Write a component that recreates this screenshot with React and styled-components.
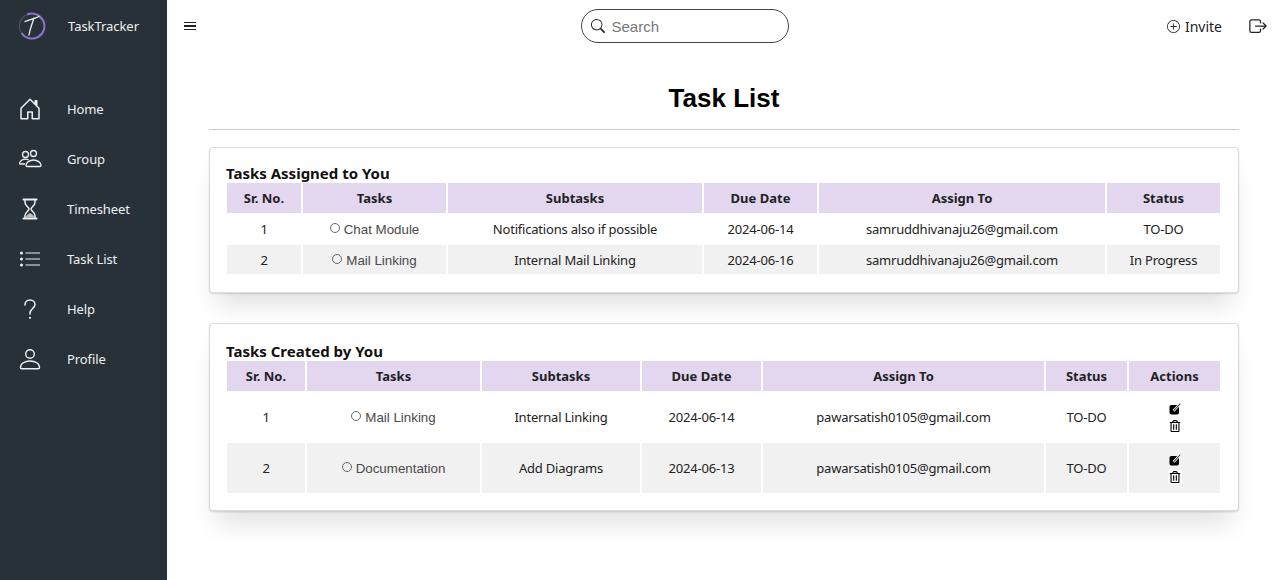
import React from "react";
import styled, { createGlobalStyle } from "styled-components";
import { BsHouseDoor, BsPlusCircle, BsSearch } from "react-icons/bs";
import { FaRegTrashAlt } from "react-icons/fa";
import { IoExitOutline } from "react-icons/io5";

const UI_FONT = `"Noto Sans", "Open Sans", sans-serif`;
const ARIAL = `"Liberation Sans", Arial, sans-serif`;

const GlobalStyle = createGlobalStyle`
  html, body {
    margin: 0;
    padding: 0;
    background: #fff;
    font-family: ${UI_FONT};
  }
  * {
    box-sizing: border-box;
  }
`;

const Page = styled.div`
  display: flex;
  width: 1280px;
  height: 580px;
  overflow: hidden;
`;

const Sidebar = styled.aside`
  width: 167px;
  flex-shrink: 0;
  background: #283138;
  color: #eef0f1;
  display: flex;
  flex-direction: column;
`;

const Brand = styled.div`
  height: 52px;
  display: flex;
  align-items: center;
  padding-left: 18px;
  gap: 22px;
  font-size: 13px;
  letter-spacing: -0.05px;
`;

const Nav = styled.nav`
  display: flex;
  flex-direction: column;
  padding-top: 32px;
`;

const NavItem = styled.div`
  height: 50px;
  display: flex;
  align-items: center;
  font-size: 13px;
  letter-spacing: -0.1px;
`;

const NavIcon = styled.span`
  width: 67px;
  padding-left: 18px;
  display: flex;
  align-items: center;
  font-size: 24px;
`;

const Main = styled.main`
  flex: 1;
  display: flex;
  flex-direction: column;
  min-width: 0;
`;

const Topbar = styled.header`
  height: 52px;
  display: flex;
  align-items: center;
  justify-content: space-between;
  padding: 0 12px 0 17px;
`;

const MenuButton = styled.span`
  display: flex;
  flex-direction: column;
  gap: 2px;
  width: 12px;
  span {
    height: 1.5px;
    background: #222;
  }
`;

const SearchBox = styled.div`
  width: 208px;
  height: 34px;
  margin-left: 8px;
  border: 1px solid #444;
  border-radius: 17px;
  display: flex;
  align-items: center;
  gap: 6px;
  padding-left: 9px;
  font-family: ${ARIAL};
  font-size: 15px;
  color: #777;
  svg {
    color: #222;
  }
`;

const TopActions = styled.div`
  display: flex;
  align-items: center;
  gap: 4px;
  font-size: 14px;
  color: #222;
`;

const Invite = styled.span`
  display: flex;
  align-items: center;
  gap: 5px;
  margin-right: 22px;
`;

const Content = styled.div`
  padding: 0 41px 0 42px;
`;

const Title = styled.h1`
  margin: 0;
  height: 78px;
  padding-top: 28px;
  border-bottom: 1px solid #ccc;
  font-family: ${ARIAL};
  font-size: 26px;
  line-height: 36px;
  font-weight: 700;
  text-align: center;
  color: #000;
`;

const Card = styled.section`
  margin-top: ${(p) => p.$top}px;
  padding: ${(p) => p.$padTop}px 15px ${(p) => p.$padBottom}px;
  background: #fff;
  border-radius: 4px;
  border: 1px solid #dcdcdc;
  box-shadow: 0 1px 2px rgba(0, 0, 0, 0.14), 0 20px 24px -8px rgba(0, 0, 0, 0.12);
`;

const CardTitle = styled.h2`
  margin: 0 0 0 1px;
  font-size: 15px;
  line-height: 18px;
  font-weight: 700;
  color: #111;
`;

const Table = styled.table`
  width: 997px;
  table-layout: fixed;
  border-collapse: separate;
  border-spacing: 2px;
  margin-top: -1px;
`;

const Th = styled.th`
  height: 30px;
  padding: 0;
  background: #e3d7f0;
  color: #222;
  font-size: 13px;
  font-weight: 700;
  text-align: center;
`;

const Td = styled.td`
  height: ${(p) => p.$height}px;
  padding: 0;
  background: ${(p) => (p.$alt ? "#f1f1f1" : "#fff")};
  color: #222;
  font-size: 13px;
  letter-spacing: -0.2px;
  text-align: center;
  white-space: nowrap;
`;

const TaskName = styled.span`
  font-family: ${ARIAL};
  font-size: 13.33px;
  letter-spacing: 0;
  color: #4a4a4a;
`;

const Radio = styled.span`
  display: inline-block;
  width: 10px;
  height: 10px;
  margin-right: 4px;
  border: 1px solid #666;
  border-radius: 50%;
  vertical-align: 1px;
`;

const Actions = styled.div`
  display: flex;
  flex-direction: column;
  align-items: center;
  gap: 5px;
  color: #000;
`;

const TrashWrap = styled.span`
  display: flex;
  padding: 1px;
  margin: -1px 0;
  background: #fff;
`;

function Logo() {
  return (
    <svg width="28" height="28" viewBox="0 0 28 28" fill="none">
      <path d="M9 2.6A12.5 12.5 0 1 1 3.5 21" stroke="#8f74cf" strokeWidth="2" />
      <path d="M3.5 21A12.5 12.5 0 0 1 9 2.6" stroke="#4a4f57" strokeWidth="1.4" />
      <path d="M7 9.5c4-2 9-2.5 14-5M16 6c-1.5 5-4 10-5 17" stroke="#f2f2f2" strokeWidth="1.3" strokeLinecap="round" />
    </svg>
  );
}

function GroupIcon() {
  return (
    <svg width="24" height="24" viewBox="0 0 24 24" fill="none" stroke="currentColor" strokeWidth="1.3">
      <circle cx="7.5" cy="7.5" r="3" />
      <circle cx="15.5" cy="6.5" r="3" />
      <path d="M1.5 17c0-3 3-4.8 6-4.8 1.4 0 2.3.3 3 .7M1.5 17h5.5" />
      <path d="M8 18.5c0-3 3.6-5.5 7.5-5.5s7.5 2.5 7.5 5.5c0 .6-.4 1-1 1H9c-.6 0-1-.4-1-1Z" />
    </svg>
  );
}

function HourglassIcon() {
  return (
    <svg width="24" height="24" viewBox="0 0 24 24" fill="none" stroke="currentColor" strokeWidth="1.5">
      <path d="M5.5 2.5h13M5.5 21.5h13" strokeWidth="2" strokeLinecap="round" />
      <path d="M7 3v2.5c0 3 4 5 4 6.5s-4 3.5-4 6.5V21M17 3v2.5c0 3-4 5-4 6.5s4 3.5 4 6.5V21" />
      <path d="M7.5 20.5c.5-2.5 3-3.5 4.5-4.5 1.5 1 4 2 4.5 4.5Z" fill="currentColor" opacity="0.75" stroke="none" />
    </svg>
  );
}

function ListIcon() {
  return (
    <svg width="24" height="24" viewBox="0 0 24 24" fill="currentColor">
      <circle cx="3.5" cy="6" r="1.5" />
      <circle cx="3.5" cy="12" r="1.5" />
      <circle cx="3.5" cy="18" r="1.5" />
      <path d="M7.5 5.5H22v1H7.5zM7.5 11.5H22v1H7.5zM7.5 17.5H22v1H7.5z" />
    </svg>
  );
}

function HelpIcon() {
  return (
    <svg width="24" height="24" viewBox="0 0 24 24" fill="none" stroke="currentColor" strokeWidth="1.5">
      <path d="M7 8c0-3 2.2-5 5-5s5 2 5 4.5c0 3.5-5 4.5-5 8.5v1" strokeLinecap="round" />
      <circle cx="12" cy="20.8" r="1.1" fill="currentColor" stroke="none" />
    </svg>
  );
}

function ProfileIcon() {
  return (
    <svg width="24" height="24" viewBox="0 0 24 24" fill="none" stroke="currentColor" strokeWidth="1.4">
      <circle cx="12" cy="7" r="4.3" />
      <path d="M2.5 20.5c0-4 4.3-6.5 9.5-6.5s9.5 2.5 9.5 6.5c0 .8-.5 1.2-1.2 1.2H3.7c-.7 0-1.2-.4-1.2-1.2Z" />
    </svg>
  );
}

function EditIcon() {
  return (
    <svg width="12" height="12" viewBox="0 0 12 12">
      <rect x="0.5" y="2" width="9.5" height="9.5" rx="1.8" fill="#000" />
      <path d="M4.5 7.8 11.3.6" stroke="#fff" strokeWidth="2.6" />
      <path d="M4.5 7.8 11.3.6" stroke="#555" strokeWidth="1.2" />
    </svg>
  );
}

const navItems = [
  { label: "Home", icon: <BsHouseDoor /> },
  { label: "Group", icon: <GroupIcon /> },
  { label: "Timesheet", icon: <HourglassIcon /> },
  { label: "Task List", icon: <ListIcon /> },
  { label: "Help", icon: <HelpIcon /> },
  { label: "Profile", icon: <ProfileIcon /> },
];

const assigned = [
  ["1", "Chat Module", "Notifications also if possible", "2024-06-14", "samruddhivanaju26@gmail.com", "TO-DO"],
  ["2", "Mail Linking", "Internal Mail Linking", "2024-06-16", "samruddhivanaju26@gmail.com", "In Progress"],
];

const created = [
  ["1", "Mail Linking", "Internal Linking", "2024-06-14", "pawarsatish0105@gmail.com", "TO-DO"],
  ["2", "Documentation", "Add Diagrams", "2024-06-13", "pawarsatish0105@gmail.com", "TO-DO"],
];

function TaskTable({ widths, headers, rows, rowHeight, withActions }) {
  return (
    <Table>
      <colgroup>
        {widths.map((w, i) => (
          <col key={i} style={{ width: w }} />
        ))}
      </colgroup>
      <thead>
        <tr>
          {headers.map((h) => (
            <Th key={h}>{h}</Th>
          ))}
        </tr>
      </thead>
      <tbody>
        {rows.map((row, r) => (
          <tr key={r}>
            {row.map((cell, c) => (
              <Td key={c} $alt={r % 2 === 1} $height={rowHeight[r]}>
                {c === 1 ? (
                  <TaskName>
                    <Radio />
                    {cell}
                  </TaskName>
                ) : (
                  cell
                )}
              </Td>
            ))}
            {withActions && (
              <Td $alt={r % 2 === 1} $height={rowHeight[r]}>
                <Actions>
                  <EditIcon />
                  <TrashWrap>
                    <FaRegTrashAlt size={12} />
                  </TrashWrap>
                </Actions>
              </Td>
            )}
          </tr>
        ))}
      </tbody>
    </Table>
  );
}

export default function App() {
  return (
    <Page>
      <GlobalStyle />
      <Sidebar>
        <Brand>
          <Logo />
          <span>TaskTracker</span>
        </Brand>
        <Nav>
          {navItems.map((item) => (
            <NavItem key={item.label}>
              <NavIcon>{item.icon}</NavIcon>
              {item.label}
            </NavItem>
          ))}
        </Nav>
      </Sidebar>
      <Main>
        <Topbar>
          <MenuButton>
            <span />
            <span />
            <span />
          </MenuButton>
          <SearchBox>
            <BsSearch size={14} />
            Search
          </SearchBox>
          <TopActions>
            <Invite>
              <BsPlusCircle size={13} />
              Invite
            </Invite>
            <IoExitOutline size={20} />
          </TopActions>
        </Topbar>
        <Content>
          <Title>Task List</Title>
          <Card $top={17} $padTop={16} $padBottom={16}>
            <CardTitle>Tasks Assigned to You</CardTitle>
            <TaskTable
              widths={[74, 143, 254, 113, 286, 113]}
              headers={["Sr. No.", "Tasks", "Subtasks", "Due Date", "Assign To", "Status"]}
              rows={assigned}
              rowHeight={[28, 29]}
            />
          </Card>
          <Card $top={30} $padTop={18} $padBottom={15}>
            <CardTitle>Tasks Created by You</CardTitle>
            <TaskTable
              widths={[78, 173, 158, 119, 281, 81, 91]}
              headers={["Sr. No.", "Tasks", "Subtasks", "Due Date", "Assign To", "Status", "Actions"]}
              rows={created}
              rowHeight={[48, 50]}
              withActions
            />
          </Card>
        </Content>
      </Main>
    </Page>
  );
}
